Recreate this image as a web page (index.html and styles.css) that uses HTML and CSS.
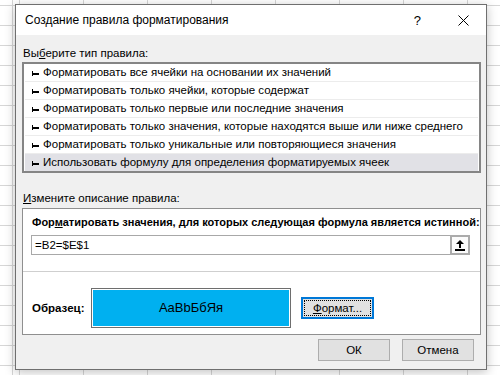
FILE: index.html
```html
<!DOCTYPE html>
<html lang="ru">
<head>
    <meta charset="UTF-8">
    <title>Создание правила форматирования</title>
    <link rel="stylesheet" href="styles.css">
</head>
<body>
    <div class="dialog">
        <div class="titlebar">
            <span class="title">Создание правила форматирования</span>
            <span class="help">?</span>
            <svg class="close" width="11" height="11" viewBox="0 0 11 11">
                <path d="M0.5 0.5 L10.5 10.5 M10.5 0.5 L0.5 10.5" stroke="#000" stroke-width="1" fill="none"/>
            </svg>
        </div>

        <div class="content">
            <div class="label">Вы<u>б</u>ерите тип правила:</div>
            <ul class="rule-list">
                <li><i class="mark"></i>Форматировать все ячейки на основании их значений</li>
                <li><i class="mark"></i>Форматировать только ячейки, которые содержат</li>
                <li><i class="mark"></i>Форматировать только первые или последние значения</li>
                <li><i class="mark"></i>Форматировать только значения, которые находятся выше или ниже среднего</li>
                <li><i class="mark"></i>Форматировать только уникальные или повторяющиеся значения</li>
                <li class="selected"><i class="mark"></i>Использовать формулу для определения форматируемых ячеек</li>
            </ul>

            <div class="label label-gap"><u>И</u>змените описание правила:</div>
            <div class="panel">
                <div class="panel-top">
                    <div class="bold">Фор<u>м</u>атировать значения, для которых следующая формула является истинной:</div>
                    <div class="formula-row">
                        <div class="formula">=B2=$E$1</div>
                        <div class="ref-btn">
                            <svg width="10" height="12" viewBox="0 0 10 12">
                                <path d="M5 1 L9 5 L6 5 L6 9 L4 9 L4 5 L1 5 Z" fill="#000"/>
                                <rect x="0" y="10" width="10" height="2" fill="#000"/>
                            </svg>
                        </div>
                    </div>
                </div>
                <div class="sample-row">
                    <div class="bold sample-label">Образец:</div>
                    <div class="preview"><div class="preview-fill">AaBbБбЯя</div></div>
                    <div class="btn btn-focus"><span class="focus-rect"><u>Ф</u>ормат...</span></div>
                </div>
            </div>

            <div class="buttons">
                <div class="btn btn-wide">ОК</div>
                <div class="btn btn-wide">Отмена</div>
            </div>
        </div>
    </div>
</body>
</html>
```

FILE: styles.css
```css
body {
    margin: 0;
    width: 500px;
    height: 375px;
    overflow: hidden;
    font-family: "Liberation Sans", Arial, sans-serif;
    font-size: 11.5px;
    color: #000;
    background-color: #fff;
    background-image:
        linear-gradient(to right, #d6d6d6 1px, transparent 1px),
        linear-gradient(to right, #d6d6d6 1px, transparent 1px),
        linear-gradient(to bottom, #d6d6d6 1px, transparent 1px);
    background-size: 1px 100%, 64px 20px, 64px 20px;
    background-position: 12px 0, 19px 5px, 0 5px;
    background-repeat: no-repeat, repeat, repeat;
}
.dialog {
    margin: 4px 0 0 15px;
    width: 470px;
    height: 364px;
    border: 1px solid #6f6f6f;
    background: #f0f0f0;
    box-shadow: 0 2px 10px rgba(0,0,0,0.25);
    display: flex;
    flex-direction: column;
}
.titlebar {
    height: 30px;
    background: #fff;
    display: flex;
    align-items: center;
    padding: 0 0 0 9px;
}
.title {
    flex: 1;
    font-size: 12px;
}
.help {
    font-size: 13px;
    margin-right: 37px;
}
.close {
    margin-right: 17px;
}
.content {
    padding: 10px 5px 0 6px;
}
.label {
    line-height: 16px;
    padding-left: 1px;
}
.label-gap {
    margin-top: 17px;
}
.rule-list {
    list-style: none;
    margin: 1px 0 0 0;
    padding: 0;
    border: 2px solid #858585;
    background: #fff;
}
.rule-list li {
    height: 17px;
    line-height: 17px;
    margin: 0 1px;
    border-bottom: 1px solid #ececec;
    display: flex;
    align-items: center;
    white-space: nowrap;
}
.rule-list li.selected {
    border-bottom: none;
    background: #e1e1e6;
}
.mark {
    flex-shrink: 0;
    display: inline-block;
    position: relative;
    width: 8px;
    height: 5px;
    margin: 1px 3px 0 7px;
}
.mark::before {
    content: "";
    position: absolute;
    left: 0;
    top: 0;
    width: 1px;
    height: 5px;
    background: #000;
}
.mark::after {
    content: "";
    position: absolute;
    left: 0;
    top: 2px;
    width: 7px;
    height: 2px;
    background: #000;
}
.panel {
    margin-top: 2px;
    border: 1px solid #8f8f8f;
    background: #fff;
}
.panel-top {
    padding: 5px 10px 16px 8px;
    border-bottom: 1px solid #cfcfcf;
}
.bold {
    font-weight: bold;
    font-size: 11px;
    line-height: 16px;
    padding-left: 1px;
    white-space: nowrap;
}
.formula-row {
    margin-top: 5px;
    display: flex;
}
.formula {
    flex: 1;
    height: 18px;
    line-height: 18px;
    border: 1px solid #a8a8a8;
    border-right: none;
    padding-left: 3px;
}
.ref-btn {
    width: 16px;
    height: 16px;
    border: 2px solid #ababab;
    background: #fbfbfb;
    display: flex;
    align-items: center;
    justify-content: center;
}
.sample-row {
    display: flex;
    align-items: center;
    padding: 16px 0 6px 8px;
}
.sample-label {
    width: 59px;
    font-size: 11.5px;
}
.preview {
    width: 196px;
    height: 36px;
    border: 1px solid #6e6e6e;
    padding: 1px;
    background: #fff;
}
.preview-fill {
    height: 36px;
    line-height: 36px;
    background: #00b0f0;
    text-align: center;
    font-size: 13px;
}
.btn {
    background: #e1e1e1;
    border: 1px solid #adadad;
    text-align: center;
    box-sizing: border-box;
}
.btn-focus {
    margin-left: 10px;
    width: 73px;
    height: 22px;
    border: 2px solid #0078d7;
    padding: 1px;
}
.focus-rect {
    display: block;
    height: 16px;
    line-height: 15px;
    border: 1px dotted #000;
    box-sizing: border-box;
}
.buttons {
    display: flex;
    justify-content: flex-end;
    gap: 12px;
    margin-top: 4px;
    padding-right: 7px;
}
.btn-wide {
    width: 72px;
    height: 22px;
    line-height: 20px;
}
```
